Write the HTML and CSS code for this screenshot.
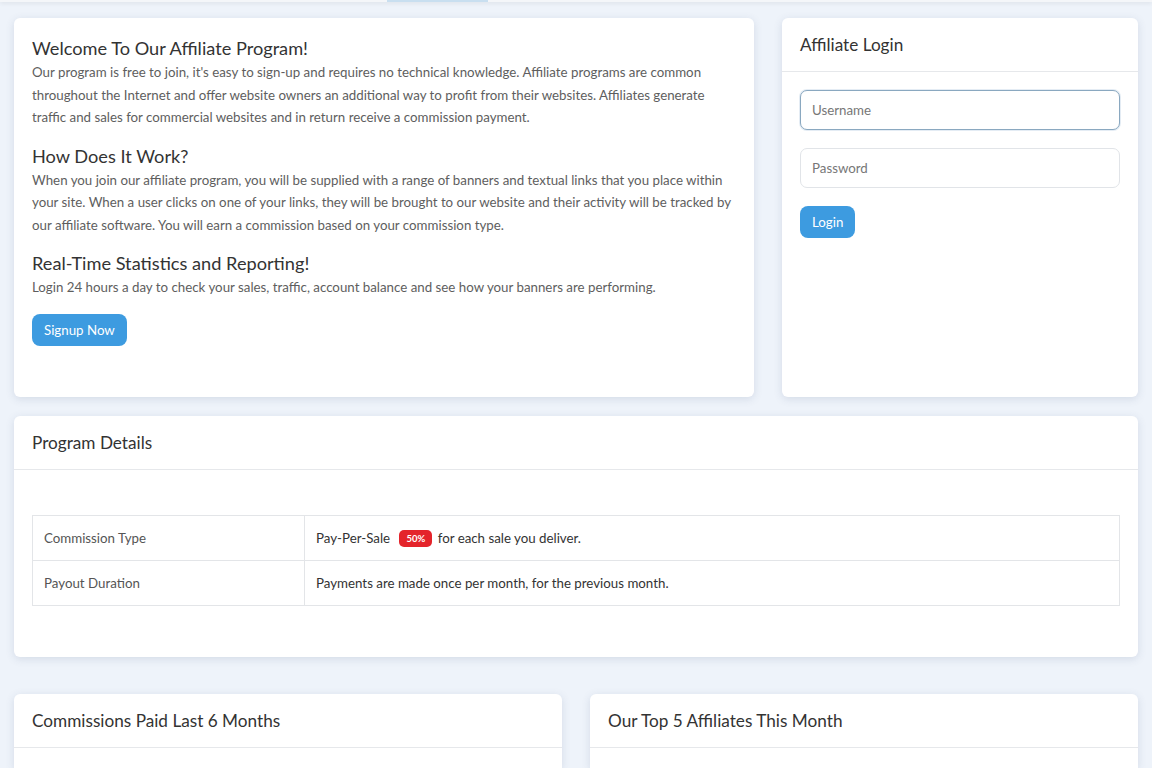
FILE: index.html
```html
<!DOCTYPE html>
<html lang="en">
<head>
  <meta charset="UTF-8">
  <title>Affiliate Program</title>
  <link rel="stylesheet" href="styles.css">
</head>
<body>

<div class="topbar">
  <span class="tab-active"></span>
</div>

<div class="pagina">
  <div class="fila-top">
    <div class="card intro">
      <h3>Welcome To Our Affiliate Program!</h3>
      <p>Our program is free to join, it's easy to sign-up and requires no technical knowledge. Affiliate programs are common throughout the Internet and offer website owners an additional way to profit from their websites. Affiliates generate traffic and sales for commercial websites and in return receive a commission payment.</p>
      <h3>How Does It Work?</h3>
      <p>When you join our affiliate program, you will be supplied with a range of banners and textual links that you place within your site. When a user clicks on one of your links, they will be brought to our website and their activity will be tracked by our affiliate software. You will earn a commission based on your commission type.</p>
      <h3>Real-Time Statistics and Reporting!</h3>
      <p>Login 24 hours a day to check your sales, traffic, account balance and see how your banners are performing.</p>
      <button class="btn">Signup Now</button>
    </div>

    <div class="card login">
      <div class="card-header">Affiliate Login</div>
      <div class="card-body">
        <input type="text" class="campo foco" placeholder="Username">
        <input type="password" class="campo" placeholder="Password">
        <button class="btn">Login</button>
      </div>
    </div>
  </div>

  <div class="card detalles">
    <div class="card-header">Program Details</div>
    <div class="card-body">
      <table class="tabla">
        <tr>
          <td class="col1">Commission Type</td>
          <td class="oscuro">Pay-Per-Sale <span class="badge">50%</span> for each sale you deliver.</td>
        </tr>
        <tr>
          <td class="col1">Payout Duration</td>
          <td class="oscuro">Payments are made once per month, for the previous month.</td>
        </tr>
      </table>
    </div>
  </div>

  <div class="fila-bottom">
    <div class="card">
      <div class="card-header">Commissions Paid Last 6 Months</div>
    </div>
    <div class="card">
      <div class="card-header">Our Top 5 Affiliates This Month</div>
    </div>
  </div>
</div>

</body>
</html>
```

FILE: styles.css
```css
body {
  margin: 0;
  font-family: 'Lato', sans-serif;
  background-color: #eef3fa;
  color: #5e5e5e;
  font-size: 13.3px;
  height: 768px;
  overflow: hidden;
}
.topbar {
  height: 2px;
  background: #f4f6f9;
  box-shadow: 0 1px 4px rgba(0, 0, 0, 0.12);
  position: relative;
}
.tab-active {
  position: absolute;
  left: 387px;
  top: 0;
  width: 101px;
  height: 2px;
  background: #c9dff0;
}
.pagina {
  padding: 16px 14px 0 14px;
}
.card {
  background: white;
  border-radius: 6px;
  box-shadow: 0 2px 8px rgba(60, 80, 120, 0.15);
}
.fila-top {
  display: flex;
  gap: 28px;
  height: 379px;
}
.intro {
  width: 740px;
  padding: 19px 18px;
  box-sizing: border-box;
}
.intro h3 {
  font-size: 18.2px;
  font-weight: normal;
  color: #333;
  margin: 0 0 2px 0;
  line-height: 22px;
}
.intro p {
  margin: 0 0 16px 0;
  line-height: 22.5px;
}
.btn {
  background-color: #3d9be0;
  color: white;
  border: none;
  border-radius: 8px;
  padding: 8px 12px;
  font-family: inherit;
  font-size: 13.3px;
  cursor: pointer;
}
.intro .btn {
  margin-top: -1px;
}
.login {
  flex: 1;
}
.card-header {
  font-size: 17.2px;
  color: #333;
  padding: 0 18px;
  height: 53px;
  line-height: 53px;
  border-bottom: 1px solid #e6e8eb;
}
.card-body {
  padding: 18px;
}
.campo {
  display: block;
  width: 100%;
  box-sizing: border-box;
  height: 40px;
  border: 1px solid #e1e4e8;
  border-radius: 7px;
  padding: 0 11px;
  font-family: inherit;
  font-size: 13.3px;
  color: #555;
  margin-bottom: 18px;
}
.campo::placeholder {
  color: #777;
}
.foco {
  border-color: #8aa8c0;
  box-shadow: 0 0 0 1px rgba(120, 160, 200, 0.2);
}
.detalles {
  margin-top: 19px;
  height: 241px;
}
.detalles .card-body {
  padding: 45px 18px;
}
.tabla {
  width: 100%;
  border-collapse: collapse;
}
.tabla td {
  border: 1px solid #e3e5e8;
  height: 44px;
  padding: 0 11px;
}
.tabla .col1 {
  width: 249px;
  color: #555;
}
.oscuro {
  color: #333;
}
.badge {
  display: inline-block;
  background: #e4242b;
  color: white;
  font-size: 9.5px;
  font-weight: bold;
  padding: 3px 7px;
  border-radius: 5px;
  margin: 0 2px 0 6px;
  vertical-align: 1px;
}
.fila-bottom {
  display: flex;
  gap: 28px;
  margin-top: 37px;
}
.fila-bottom .card {
  flex: 1;
  height: 74px;
  border-radius: 6px 6px 0 0;
}
```
